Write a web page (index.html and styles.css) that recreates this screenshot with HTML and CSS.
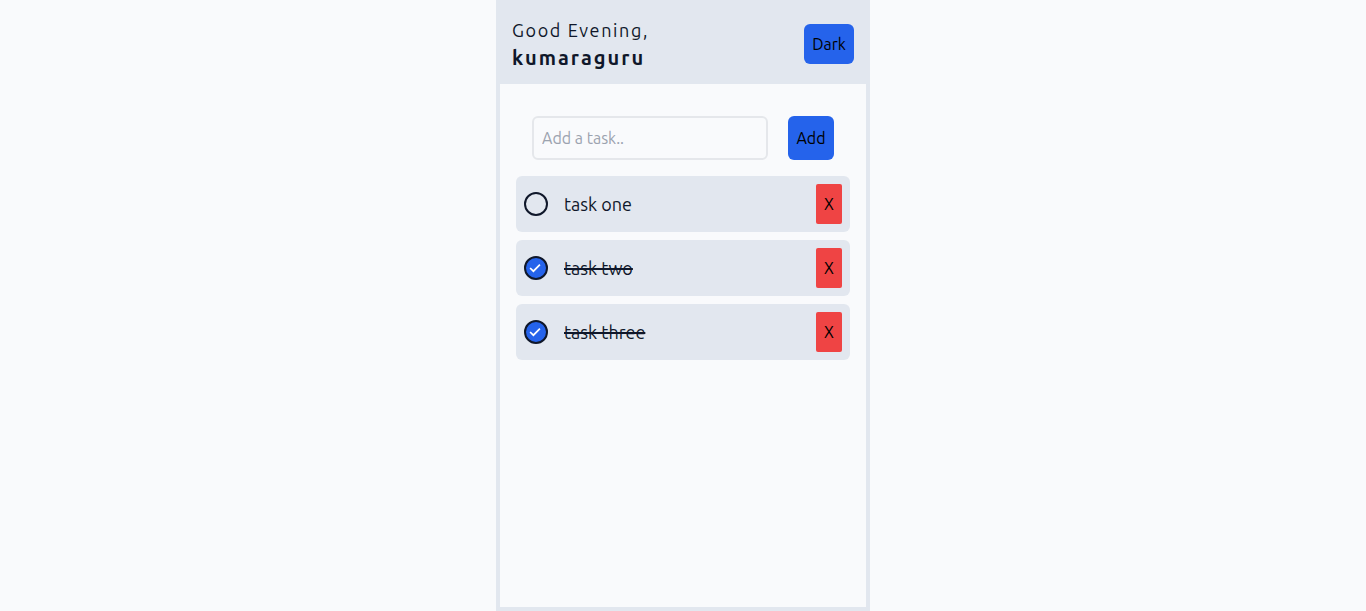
FILE: index.html
```html
<!DOCTYPE html>
<html lang="en">
<head>
  <meta charset="utf-8">
  <meta name="viewport" content="width=device-width, initial-scale=1">
  <title>Tasks</title>
  <link rel="stylesheet" href="styles.css">
</head>
<body>
  <main class="app">
    <header class="header">
      <h1 class="greeting">Good Evening, <strong class="name">kumaraguru</strong></h1>
      <button class="button theme-button" type="button">Dark</button>
    </header>
    <form class="add-form">
      <input class="task-input" type="text" placeholder="Add a task.." aria-label="Add a task">
      <button class="button add-button" type="button">Add</button>
    </form>
    <ul class="tasks">
      <li class="task">
        <label class="task-label">
          <input class="native-check" type="checkbox">
          <span class="circle"><svg class="tick" viewBox="0 0 12 12" aria-hidden="true"><path d="M1.1 6 4.4 9.2 10.9 2.7"/></svg></span>
          <span class="task-text">task one</span>
        </label>
        <button class="delete" type="button" aria-label="Delete task one">X</button>
      </li>
      <li class="task">
        <label class="task-label">
          <input class="native-check" type="checkbox" checked>
          <span class="circle"><svg class="tick" viewBox="0 0 12 12" aria-hidden="true"><path d="M1.1 6 4.4 9.2 10.9 2.7"/></svg></span>
          <span class="task-text">task two</span>
        </label>
        <button class="delete" type="button" aria-label="Delete task two">X</button>
      </li>
      <li class="task">
        <label class="task-label">
          <input class="native-check" type="checkbox" checked>
          <span class="circle"><svg class="tick" viewBox="0 0 12 12" aria-hidden="true"><path d="M1.1 6 4.4 9.2 10.9 2.7"/></svg></span>
          <span class="task-text">task three</span>
        </label>
        <button class="delete" type="button" aria-label="Delete task three">X</button>
      </li>
    </ul>
  </main>
</body>
</html>
```
FILE: styles.css
```css
*, *::before, *::after { box-sizing: border-box; }

body {
  margin: 0;
  background: #f9fafc;
  color: #0f172a;
  font: 16px/24px Ubuntu, "Noto Sans", sans-serif;
}

button, input { font: inherit; }
button { cursor: pointer; }

.app {
  width: 100%;
  max-width: 374px;
  min-height: 100vh;
  margin: 0 auto;
  border: 4px solid #e2e7ef;
  border-top: 0;
}

.header {
  display: flex;
  align-items: center;
  justify-content: space-between;
  padding: 16px 12px 12px;
  background: #e2e7ef;
}

.greeting {
  margin: 0;
  font-size: 18px;
  font-weight: 400;
  line-height: 28px;
  letter-spacing: 0.09em;
}

.name {
  display: block;
  font-size: 20px;
  letter-spacing: 0.1em;
}

.button {
  padding: 8px 0;
  border: 0;
  border-radius: 6px;
  background: #2563eb;
  color: #000;
}

.theme-button { min-width: 50px; }
.add-button { min-width: 46px; }

.add-form {
  display: flex;
  gap: 20px;
  padding: 32px 32px 16px;
}

.task-input {
  flex: 1;
  min-width: 0;
  padding: 8px;
  border: 2px solid #e5e7eb;
  border-radius: 6px;
  background: transparent;
  color: inherit;
}

.task-input::placeholder { color: #9ca3af; opacity: 1; }

.tasks {
  display: grid;
  gap: 8px;
  margin: 0;
  padding: 0 16px 16px;
  list-style: none;
}

.task {
  display: flex;
  align-items: center;
  justify-content: space-between;
  padding: 8px;
  border-radius: 6px;
  background: #e2e7ef;
}

.task-label {
  display: flex;
  flex: 1;
  align-items: center;
  gap: 16px;
  font-size: 18px;
  line-height: 28px;
  cursor: pointer;
}

.native-check {
  position: absolute;
  width: 24px;
  height: 24px;
  margin: 0;
  opacity: 0;
}

.circle {
  display: grid;
  place-items: center;
  width: 24px;
  height: 24px;
  padding-right: 2px;
  border: 2px solid #0f172a;
  border-radius: 50%;
}

.tick {
  display: none;
  width: 12px;
  height: 12px;
  fill: none;
  stroke: #fff;
  stroke-width: 1.7;
}

.native-check:checked + .circle { background: #2563eb; }
.native-check:checked + .circle .tick { display: block; }
.native-check:checked ~ .task-text { text-decoration: line-through 2px; }
.native-check:focus-visible + .circle { outline: 2px solid #2563eb; outline-offset: 2px; }

.delete {
  min-width: 26px;
  padding: 8px 0;
  border: 0;
  border-radius: 2px;
  background: #ef4444;
  color: #000;
}
```
